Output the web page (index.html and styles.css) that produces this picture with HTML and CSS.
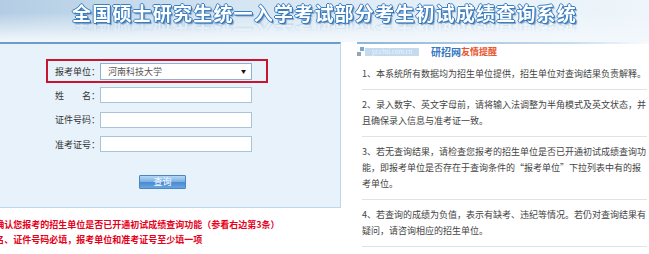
FILE: index.html
```html
<!DOCTYPE html>
<html lang="zh-CN">
<head>
  <meta charset="UTF-8">
  <meta name="viewport" content="width=device-width, initial-scale=1.0">
  <title>全国硕士研究生统一入学考试部分考生初试成绩查询系统</title>
  <link rel="stylesheet" href="styles.css">
</head>
<body>
  <header class="top">
    <h1 class="title">全国硕士研究生统一入学考试部分考生初试成绩查询系统</h1>
  </header>

  <div class="main">
    <div class="left">
      <form class="panel" onsubmit="return false">
        <div class="row pick">
          <label for="dw">报考单位：</label>
          <div class="select">
            <select id="dw">
              <option>河南科技大学</option>
            </select>
          </div>
        </div>
        <div class="row">
          <label for="xm">姓&emsp;&emsp;名：</label>
          <input id="xm" type="text">
        </div>
        <div class="row">
          <label for="zjhm">证件号码：</label>
          <input id="zjhm" type="text">
        </div>
        <div class="row">
          <label for="zkzh">准考证号：</label>
          <input id="zkzh" type="text">
        </div>
        <div class="actions">
          <button type="submit">查询</button>
        </div>
      </form>

      <div class="notes">
        <p>1、请确认您报考的招生单位是否已开通初试成绩查询功能（参看右边第3条）</p>
        <p>2、姓名、证件号码必填，报考单位和准考证号至少填一项</p>
      </div>
    </div>

    <div class="right">
      <div class="tips-head">
        <svg class="dots" width="7" height="10" viewBox="0 0 7 10">
          <rect x="3" y="0" width="4" height="4" fill="#7aa6d2"/>
          <rect x="0" y="5" width="4" height="4" fill="#9aa4ae"/>
        </svg>
        <span class="badge">yz.chsi.com.cn</span>
        <span class="brand">研招网</span><span class="remind">友情提醒</span>
      </div>
      <ul class="tips">
        <li>1、本系统所有数据均为招生单位提供，招生单位对查询结果负责解释。</li>
        <li>2、录入数字、英文字母前，请将输入法调整为半角模式及英文状态，并且确保录入信息与准考证一致。</li>
        <li>3、若无查询结果，请检查您报考的招生单位是否已开通初试成绩查询功能，即报考单位是否存在于查询条件的“报考单位”下拉列表中有的报考单位。</li>
        <li>4、若查询的成绩为负值，表示有缺考、违纪等情况。若仍对查询结果有疑问，请咨询相应的招生单位。</li>
      </ul>
    </div>
  </div>
</body>
</html>
```

FILE: styles.css
```css
body {
  margin: 0;
  font-family: "Noto Sans CJK SC", sans-serif;
  font-size: 9px;
  color: #333;
  background: #fff;
  overflow: hidden;
}

.top {
  height: 42px;
  background:
    linear-gradient(180deg, rgba(255, 255, 255, 0) 30%, #f3f8fc 100%),
    linear-gradient(90deg, #b3cde4 0%, #d3e4f2 35%, #e6f0f8 70%, #eef5fb 100%);
}

.title {
  margin: 0;
  padding-top: 3px;
  text-align: center;
  font-size: 19px;
  line-height: 20px;
  font-weight: bold;
  letter-spacing: 1.2px;
  color: #fff;
  text-shadow:
    1px 0 0 #3b7fc1, -1px 0 0 #3b7fc1, 0 1px 0 #3b7fc1, 0 -1px 0 #3b7fc1,
    1px 1px 0 #2c6aa8, 2px 2px 1px rgba(40, 90, 150, 0.5);
  -webkit-box-reflect: below -3px linear-gradient(transparent 45%, rgba(255, 255, 255, 0.25));
}

.main {
  display: flex;
  align-items: flex-start;
  margin-left: -30px;
}

.left {
  width: 371px;
  flex: none;
}

.panel {
  margin: 0;
  background: #e8f2fb;
  border: 1px solid #bfd7ec;
  border-top: 2px solid #6a9dcd;
  padding: 15px 0 18px 75px;
}

.row {
  display: flex;
  align-items: center;
  height: 24.5px;
  padding-left: 9px;
}

.row label {
  width: 45px;
  flex: none;
  color: #333;
}

.pick {
  width: fit-content;
  height: 20px;
  border: 2px solid #c8142f;
  padding: 0 14px 0 7px;
}

.select {
  position: relative;
}

.select select {
  appearance: none;
  -webkit-appearance: none;
  width: 152px;
  height: 17px;
  margin: 0;
  padding: 0 0 0 7px;
  border: 1px solid #8fb0d0;
  background: #fff;
  font-family: inherit;
  font-size: 9px;
  color: #555;
}

.select::after {
  content: "▼";
  position: absolute;
  right: 6px;
  top: 4px;
  font-size: 5px;
  color: #111;
  pointer-events: none;
}

.row input {
  width: 152px;
  height: 16px;
  box-sizing: border-box;
  margin: 0;
  border: 1px solid #a9c3db;
  background: #fff;
}

.actions {
  padding: 18.5px 0 0 93px;
}

.actions button {
  display: block;
  width: 47px;
  height: 14px;
  padding: 0;
  border: 1px solid #4a86c4;
  border-radius: 1px;
  background: linear-gradient(#b3d7f5, #7fb4e6 45%, #4b8ad0 55%, #6aa6e0);
  color: #fff;
  font-family: inherit;
  font-size: 9px;
  line-height: 12px;
  cursor: pointer;
}

.notes {
  margin-top: 8.5px;
  padding-left: 2px;
  color: #e5001a;
  font-weight: bold;
  line-height: 15px;
}

.notes p {
  margin: 0;
}

.right {
  margin-left: 16px;
  width: 300px;
  flex: none;
  background: linear-gradient(90deg, #8fb5d8, #c4daee 70%, rgba(255, 255, 255, 0)) top left / 100% 2px no-repeat;
  padding-top: 2px;
}

.tips-head {
  display: flex;
  align-items: center;
  height: 15px;
  font-size: 10px;
  font-weight: bold;
}

.dots {
  display: block;
}

.badge {
  margin-left: 1px;
  width: 54px;
  height: 8px;
  background: #c4daef;
  color: #eef5fc;
  font-size: 6px;
  font-weight: normal;
  line-height: 8px;
  text-align: center;
  overflow: hidden;
}

.brand {
  margin-left: 12px;
  color: #3677c2;
}

.remind {
  color: #e9542f;
  font-size: 9px;
}

.tips {
  list-style: none;
  margin: 0 0 0 5px;
  padding: 0;
  width: 285px;
}

.tips li {
  padding: 7px 0 7px;
  border-bottom: 1px solid #e2e2e2;
  line-height: 16px;
  color: #444;
}
```
